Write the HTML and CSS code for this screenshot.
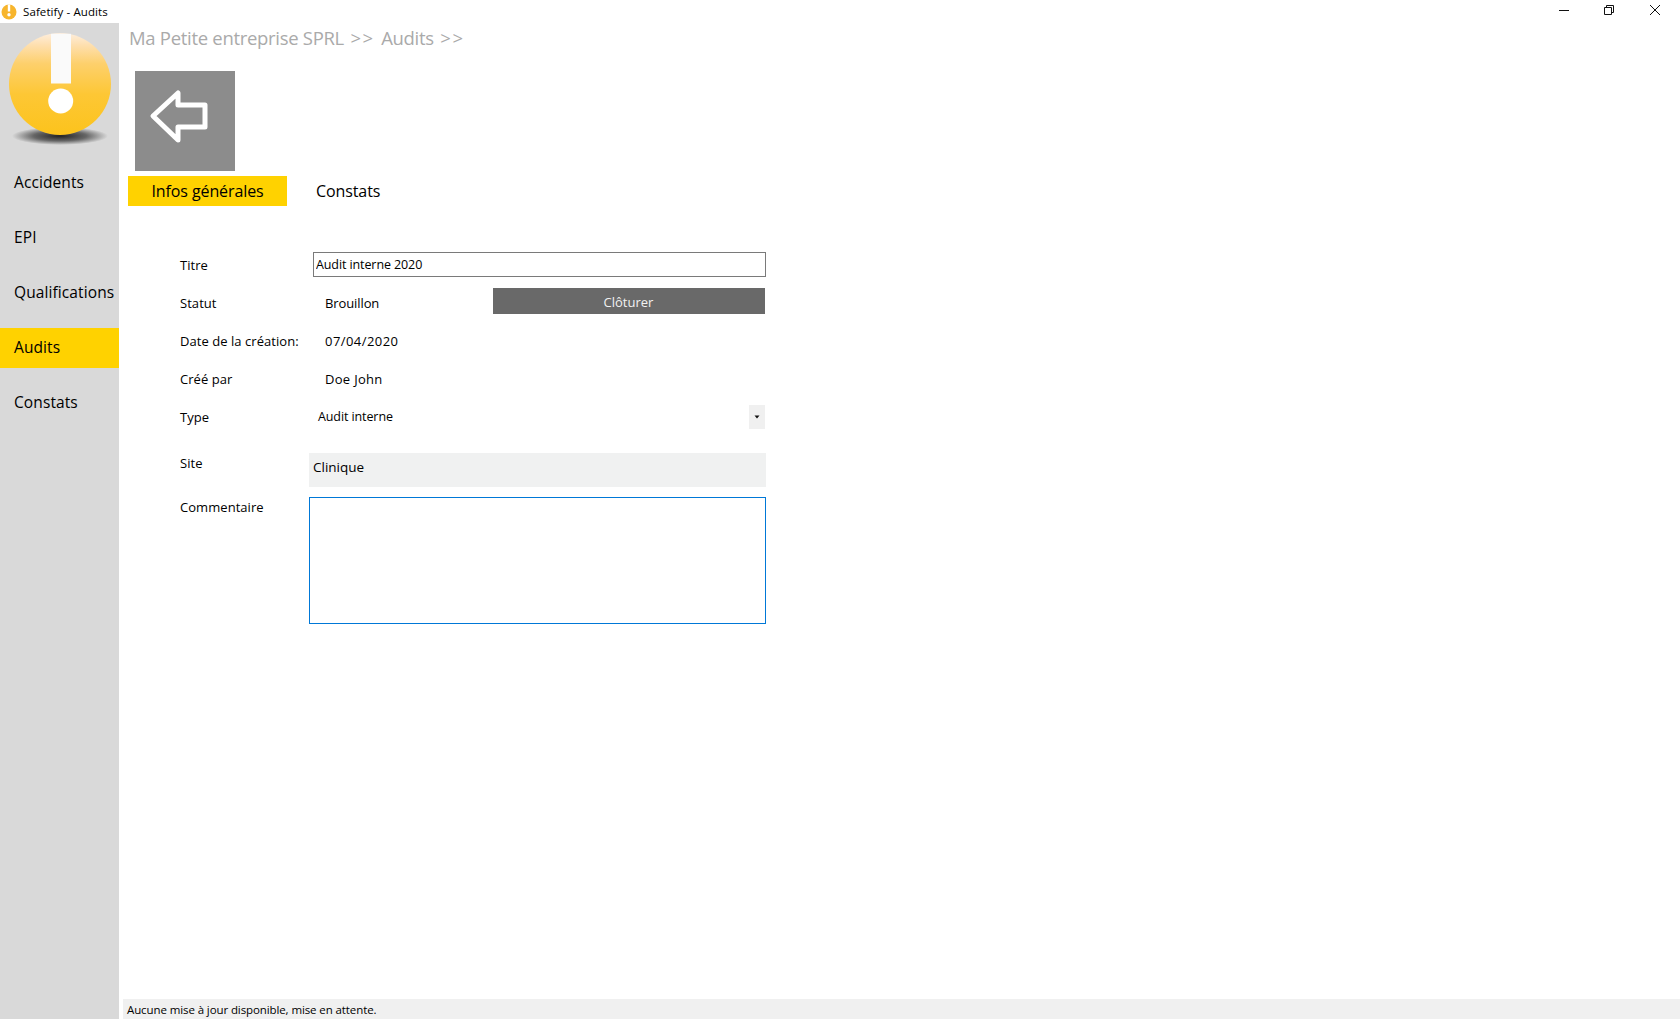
FILE: index.html
```html
<!DOCTYPE html>
<html lang="fr">
<head>
<meta charset="utf-8">
<title>Safetify - Audits</title>
<link rel="stylesheet" href="styles.css">
</head>
<body>
<header class="titlebar">
  <svg class="app-icon" width="16" height="16" viewBox="0 0 16 16"><circle cx="8" cy="8" r="7.5" fill="#f7b52c"/><rect x="6.8" y="0.5" width="2.4" height="7" fill="#fff"/><circle cx="8" cy="10.8" r="1.7" fill="#fff"/></svg>
  <span class="app-title">Safetify - Audits</span>
  <div class="win-controls">
    <button class="win-btn" type="button" aria-label="Réduire"><svg width="12" height="12" viewBox="0 0 12 12"><path d="M1 6.5h10" stroke="#111" fill="none"/></svg></button>
    <button class="win-btn" type="button" aria-label="Restaurer"><svg width="12" height="12" viewBox="0 0 12 12"><path d="M1.5 3.5h7v7h-7zM3.5 3.5v-2h7v7h-2" stroke="#111" fill="none"/></svg></button>
    <button class="win-btn" type="button" aria-label="Fermer"><svg width="12" height="12" viewBox="0 0 12 12"><path d="M1 1l10 10M11 1L1 11" stroke="#111" fill="none"/></svg></button>
  </div>
</header>
<div class="shell">
  <aside class="sidebar">
    <svg class="logo" width="119" height="139" viewBox="0 0 119 139">
      <defs>
        <linearGradient id="ball" x1="0" y1="0" x2="0" y2="1">
          <stop offset="0" stop-color="#feeedd"/>
          <stop offset="0.12" stop-color="#fedfae"/>
          <stop offset="0.3" stop-color="#fdd06c"/>
          <stop offset="0.6" stop-color="#fdc735"/>
          <stop offset="1" stop-color="#fcc31c"/>
        </linearGradient>
        <radialGradient id="shade">
          <stop offset="0" stop-color="#222"/>
          <stop offset="0.55" stop-color="#666"/>
          <stop offset="1" stop-color="#d9d9d9"/>
        </radialGradient>
      </defs>
      <ellipse cx="60" cy="113" rx="48" ry="9" fill="url(#shade)"/>
      <circle cx="60" cy="61" r="51" fill="url(#ball)"/>
      <path d="M51 10.8h20V60.500H51z" fill="#fafafa"/>
      <circle cx="60.700" cy="78" r="12.500" fill="#fff"/>
    </svg>
    <nav class="nav">
      <a class="nav-item">Accidents</a>
      <a class="nav-item">EPI</a>
      <a class="nav-item">Qualifications</a>
      <a class="nav-item active">Audits</a>
      <a class="nav-item">Constats</a>
    </nav>
  </aside>
  <main class="content">
    <div class="breadcrumb">Ma Petite entreprise SPRL <span class="sep">&gt;&gt;</span> Audits <span class="sep">&gt;&gt;</span></div>
    <button class="back" type="button" aria-label="Retour">
      <svg width="100" height="100" viewBox="0 0 100 100"><path d="M18 45L43 22V34H70V56H43V69Z" fill="none" stroke="#fff" stroke-width="5" stroke-linejoin="round"/></svg>
    </button>
    <div class="tabs">
      <div class="tab active">Infos générales</div>
      <div class="tab">Constats</div>
    </div>
    <form class="form">
      <div class="row"><span class="label">Titre</span><div class="input-wrap"><input class="input" type="text" value="Audit interne 2020"></div></div>
      <div class="row"><span class="label">Statut</span><div class="value-split"><span class="value">Brouillon</span><button class="close-btn" type="button">Clôturer</button></div></div>
      <div class="row"><span class="label">Date de la création:</span><span class="value date">07/04/2020</span></div>
      <div class="row"><span class="label">Créé par</span><span class="value name">Doe John</span></div>
      <div class="row"><span class="label">Type</span><div class="select"><span>Audit interne</span><span class="select-arrow"><svg width="6" height="4" viewBox="0 0 6 4"><path d="M0.500 0.500h5L3 3.500z" fill="#111"/></svg></span></div></div>
      <div class="row site"><span class="label">Site</span><div class="site-box">Clinique</div></div>
      <div class="row comment"><span class="label">Commentaire</span><div class="textarea"></div></div>
    </form>
    <footer class="status">Aucune mise à jour disponible, mise en attente.</footer>
  </main>
</div>
</body>
</html>
```
FILE: styles.css
```css
* { box-sizing: border-box; }
html, body { margin: 0; height: 100%; overflow: hidden; }
body {
  display: flex;
  flex-direction: column;
  height: 1019px;
  background: #fff;
  color: #000;
  font-family: "Open Sans", "Noto Sans", sans-serif;
  font-size: 13px;
}
.titlebar {
  display: flex;
  align-items: center;
  height: 23px;
  flex: none;
  padding-left: 1px;
}
.app-icon { flex: none; }
.app-title { margin-left: 6px; font-size: 11.500px; letter-spacing: 0.1px; }
.win-controls { display: flex; margin-left: auto; padding-right: 3px; align-self: flex-start; }
.win-btn {
  width: 45px;
  height: 20px;
  padding: 0;
  border: 0;
  background: none;
  display: flex;
  align-items: center;
  justify-content: center;
}
.win-btn:last-child { margin-left: 1px; }
.shell { flex: 1; display: flex; min-height: 0; }
.sidebar { width: 119px; flex: none; background: #d9d9d9; }
.logo { display: block; }
.nav { display: flex; flex-direction: column; gap: 15px; padding-top: 1px; }
.nav-item {
  height: 40px;
  padding: 0 0 2px 14px;
  display: flex;
  align-items: center;
  font-size: 15.500px;
  letter-spacing: 0.1px;
  white-space: nowrap;
}
.nav-item.active { background: #ffd200; }
.content {
  flex: 1;
  min-width: 0;
  display: flex;
  flex-direction: column;
  padding-left: 9px;
}
.breadcrumb {
  height: 28px;
  margin-left: 1px;
  display: flex;
  align-items: center;
  font-size: 18.500px;
  letter-spacing: -0.3px;
  color: #aaaaaa;
  white-space: pre;
}
.sep { margin: 0 2px; letter-spacing: 1.5px; }
.back {
  width: 100px;
  height: 100px;
  margin: 20px 0 0 7px;
  padding: 0;
  border: 0;
  background: #8c8c8c;
  flex: none;
}
.back svg { display: block; }
.tabs { display: flex; margin-top: 5px; height: 30px; flex: none; }
.tab {
  display: flex;
  align-items: center;
  justify-content: center;
  padding-bottom: 1px;
  font-size: 16px;
  letter-spacing: -0.1px;
}
.tab.active { width: 159px; background: #ffd200; margin-right: 29px; }
.form { margin: 40px 0 0 52px; width: 586px; display: flex; flex-direction: column; }
.row { display: flex; align-items: center; height: 38px; flex: none; }
.label { width: 129px; flex: none; letter-spacing: 0.05px; white-space: nowrap; }
.value { padding-left: 16px; letter-spacing: -0.1px; }
.value.date { letter-spacing: 0.45px; }
.value.name { letter-spacing: 0.3px; }
.input-wrap { flex: 1; padding-left: 4px; }
.input {
  display: block;
  width: 100%;
  height: 25px;
  margin-top: -2px;
  padding: 0 2px;
  border: 1px solid #7a7a7a;
  border-radius: 0;
  outline: 0;
  font: inherit;
  font-size: 12.500px;
  letter-spacing: -0.1px;
  color: #000;
  background: #fff;
}
.value-split { flex: 1; display: flex; align-items: center; justify-content: space-between; padding-right: 1px; }
.close-btn {
  width: 272px;
  height: 26px;
  margin-top: -4px;
  padding: 2px 1px 0 0;
  border: 0;
  background: #696969;
  color: #f2f2f2;
  font: inherit;
}
.select {
  flex: 1;
  display: flex;
  align-items: center;
  justify-content: space-between;
  padding: 0 1px 0 9px;
  font-size: 12.500px;
  letter-spacing: -0.1px;
}
.select > span:first-child { margin-top: -2px; }
.select-arrow {
  width: 16px;
  height: 24px;
  background: #f0f0f0;
  display: flex;
  align-items: center;
  justify-content: center;
}
.site { align-items: flex-start; height: 44px; margin-top: 17px; }
.site .label { margin-top: 1px; }
.site-box {
  flex: 1;
  height: 34px;
  padding: 5px 0 0 4px;
  background: #f0f1f1;
  font-size: 13.500px;
  color: #000;
}
.comment { align-items: flex-start; height: 127px; }
.comment .label { margin-top: 1px; }
.textarea { flex: 1; height: 127px; border: 1px solid #0078d7; background: #fff; }
.status {
  margin: auto 0 0 -5px;
  height: 20px;
  padding-left: 4px;
  display: flex;
  align-items: center;
  background: #f0f0f0;
  font-size: 11.500px;
  letter-spacing: -0.1px;
}
```
